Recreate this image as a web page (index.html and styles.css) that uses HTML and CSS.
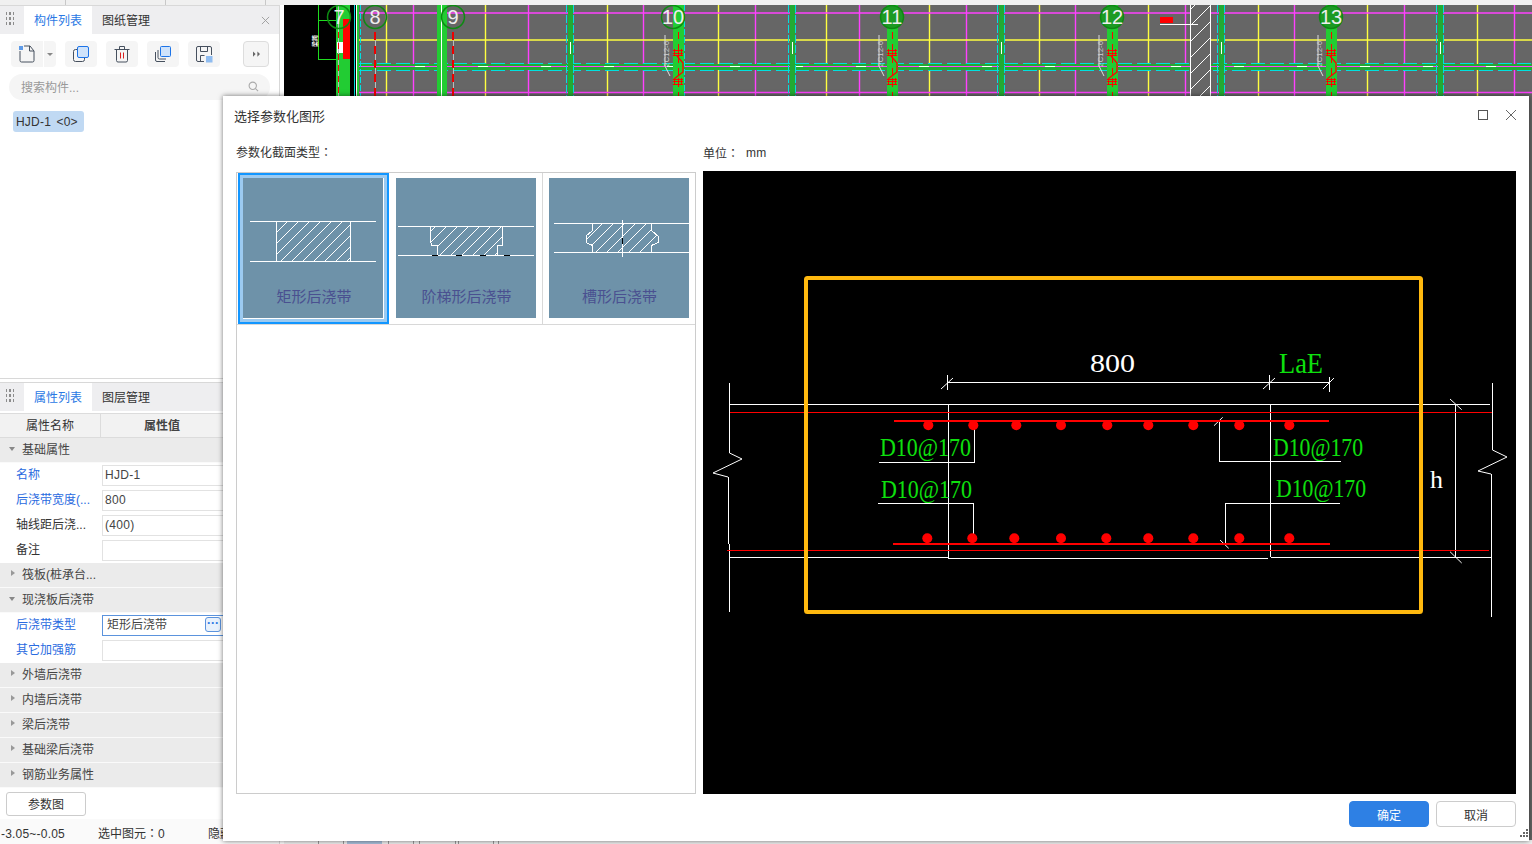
FILE: index.html
```html
<!DOCTYPE html>
<html lang="zh">
<head>
<meta charset="utf-8">
<title>选择参数化图形</title>
<link rel="stylesheet" href="styles.css">
</head>
<body>
<div class="app">
  <div class="ruler"><i></i><i></i><i></i></div>
  <div class="workspace">
    <aside class="side">
      <section class="panel panel-top">
        <header class="tabs">
          <span class="grip"></span>
          <span class="tab active">构件列表</span>
          <span class="tab">图纸管理</span>
          <svg class="tab-close" viewBox="0 0 10 10"><path d="M1 1l8 8M9 1l-8 8"/></svg>
        </header>
        <div class="toolbar">
          <div class="tool tool-new">
            <svg class="ico" viewBox="0 0 18 18"><path class="st" d="M2 6v9.500q0 1.500 1.500 1.500h11q1.500 0 1.500-1.500V6l-4-5H6"/><path class="st" d="M11.500 1v5h4.500"/><rect class="bl" x="1" y="1" width="4" height="4"/></svg>
          </div>
          <div class="tool-drop"><b></b></div>
          <div class="tool">
            <svg class="ico" viewBox="0 0 18 18"><rect class="st" x="1.500" y="4.500" width="11" height="12" rx="2"/><rect class="bf" x="5.500" y="1.500" width="11" height="11" rx="1.500"/></svg>
          </div>
          <div class="tool">
            <svg class="ico" viewBox="0 0 18 18"><path class="st" d="M1.500 4.500h15M6.500 4.500v-3h5v3M3.500 4.500v11q0 1.500 1.500 1.500h8q1.500 0 1.500-1.500v-11"/><path class="rd" d="M7.500 7.500v6M10.500 7.500v6"/></svg>
          </div>
          <div class="tool">
            <svg class="ico" viewBox="0 0 18 18"><path class="st" d="M1.500 7v8q0 1.500 1.500 1.500h8M4 5v7.500q0 1.500 1.500 1.500H12"/><rect class="bf" x="6.500" y="1.500" width="10" height="10" rx="1"/></svg>
          </div>
          <div class="tool">
            <svg class="ico" viewBox="0 0 18 18"><path class="st" d="M9 16.500H3q-1.500 0-1.500-1.500V3q0-1.500 1.500-1.500h12q1.500 0 1.500 1.500v7M5.500 1.500v5h7v-5M5.500 16.500v-6h4"/><rect class="bl2" x="11" y="11" width="6.500" height="6.500"/></svg>
          </div>
          <div class="tool-more"><svg viewBox="0 0 8 6"><path d="M0 0l3 3-3 3zM5 0l3 3-3 3z"/></svg></div>
        </div>
        <div class="search">
          <span>搜索构件...</span>
          <svg viewBox="0 0 12 12"><circle cx="5.200" cy="5.200" r="4"/><path d="M8 8l3 3"/></svg>
        </div>
        <div class="tree"><span class="tag">HJD-1 &lt;0&gt;</span></div>
      </section>
      <section class="panel panel-bottom">
        <header class="tabs">
          <span class="grip"></span>
          <span class="tab active">属性列表</span>
          <span class="tab">图层管理</span>
        </header>
        <div class="grid">
          <div class="grid-head"><span class="c-name">属性名称</span><span class="c-val">属性值</span></div>
          <div class="sect open">基础属性</div>
          <div class="row"><label class="blue">名称</label><span class="field">HJD-1</span></div>
          <div class="row"><label class="blue">后浇带宽度(...</label><span class="field">800</span></div>
          <div class="row"><label>轴线距后浇...</label><span class="field">(400)</span></div>
          <div class="row"><label>备注</label><span class="field"></span></div>
          <div class="sect">筏板(桩承台...</div>
          <div class="sect open">现浇板后浇带</div>
          <div class="row"><label class="blue">后浇带类型</label><span class="field focus">矩形后浇带<em class="dots">···</em></span></div>
          <div class="row"><label class="blue">其它加强筋</label><span class="field"></span></div>
          <div class="sect">外墙后浇带</div>
          <div class="sect">内墙后浇带</div>
          <div class="sect">梁后浇带</div>
          <div class="sect">基础梁后浇带</div>
          <div class="sect">钢筋业务属性</div>
        </div>
        <div class="grid-foot"><button class="param-btn">参数图</button></div>
        <footer class="status"><span class="s1">-3.05~-0.05</span><span class="s2">选中图元<b class="colon" lang="zh-Hant">：</b>0</span><span class="s3">隐藏图元<b class="colon" lang="zh-Hant">：</b>0</span></footer>
      </section>
    </aside>
    <main class="cad">
      <svg class="cad-svg" viewBox="284 5 1248 835" shape-rendering="crispEdges">
        <defs>
          <g id="axisbar">
            <rect x="-5.500" y="5" width="11" height="91" fill="#22cc33"/>
            <path d="M0 32v64" stroke="#f00" stroke-width="1" stroke-dasharray="7 5" fill="none"/>
          </g>
          <g id="rebar">
            <path d="M-5 50h10M-5 53h10M-5 55h10M-5 79h10M-5 81h10M-5 84h10M-4 49v7M0 49v7M3 49v7M-4 78v7M0 78v7M3 78v7" stroke="#f00" fill="none"/>
            <path d="M-1 56l6 7v9l-9 7" stroke="#f00" stroke-width="1.300" fill="none" shape-rendering="auto"/>
            <path d="M-13 35v31l5 10" stroke="#ddd" fill="none" shape-rendering="auto"/>
            <text transform="translate(-9 67) rotate(-90)" class="cad-small">2C12-6</text>
          </g>
          <g id="wallbar">
            <rect x="-2.500" y="5" width="5" height="91" fill="#22aa33"/>
            <path d="M-3.500 5v91M3.500 5v91" stroke="#00e0e0" stroke-width="1" stroke-dasharray="8 2" fill="none"/>
            <path d="M0 42v12" stroke="#fff" stroke-width="1"/>
          </g>
          <pattern id="cadhatch" width="16" height="16" patternUnits="userSpaceOnUse"><path d="M0 16L16 0" stroke="#fff" fill="none" shape-rendering="auto"/></pattern>
        </defs>
        <rect x="284" y="5" width="1248" height="835" fill="#666"/>
        <rect x="284" y="5" width="72" height="835" fill="#000"/>
        <g shape-rendering="auto">
          <path d="M413.500 5v91M528.500 5v91M643.500 5v91M755.500 5v91M859.500 5v91M966.500 5v91M1075.500 5v91M1185.500 5v91M1294.500 5v91M1404.500 5v91M1514.500 5v91" stroke="#ff40ff" stroke-width="1.400"/>
          <path d="M386.500 5v91M485.500 5v91M607.500 5v91M718.500 5v91M826.500 5v91M929.500 5v91M1039.500 5v91M1148.500 5v91M1258.500 5v91M1367.500 5v91M1477.500 5v91" stroke="#ffff40" stroke-width="1.400"/>
          <path d="M358 13h1174M358 92.500h1174" stroke="#ff40ff" stroke-width="1.400"/>
          <path d="M358 40h1174" stroke="#ffff40" stroke-width="1.400"/>
        </g>
        <rect x="358" y="64" width="1174" height="6" fill="#22aa33"/>
        <path d="M358 63.500h1174M358 70.500h1174" stroke="#00e0e0" stroke-width="1" stroke-dasharray="14 5" fill="none"/>
        <path d="M358 66.500h1174" stroke="#ff40ff" stroke-width="1"/>
        <path d="M415 66.500h1117" stroke="#fff" stroke-width="1" stroke-dasharray="10 53" fill="none"/>
        <path d="M318.500 5v54h17M318.500 20h22" stroke="#1fdc1f" fill="none"/>
        <text transform="translate(317 47) rotate(-90)" class="cad-tiny">梁跨</text>
        <rect x="336" y="5" width="14" height="91" fill="#22cc33"/>
        <rect x="343" y="19" width="7" height="40" fill="#f00"/>
        <rect x="337" y="42" width="6" height="11" fill="#fff"/>
        <path d="M338 5v91" stroke="#bbb"/>
        <path d="M338 32v64" stroke="#f00" stroke-dasharray="6 5" fill="none"/>
        <path d="M354 5v91" stroke="#00e0e0" stroke-width="1"/>
        <path d="M356 5v91" stroke="#fff"/>
        <rect x="357" y="5" width="2" height="91" fill="#22cc33"/>
        <path d="M360 5v91" stroke="#00e0e0" stroke-width="1" stroke-dasharray="6 2" fill="none"/>
        <use href="#wallbar" x="570"/>
        <use href="#wallbar" x="792"/>
        <use href="#wallbar" x="1001"/>
        <use href="#wallbar" x="1221"/>
        <use href="#wallbar" x="1440"/>
        <rect x="437" y="5" width="10" height="91" fill="#22cc33"/>
        <path d="M441.500 5v91" stroke="#fff" stroke-width="1"/>
        <path d="M375 32v64M453 32v64" stroke="#bbb"/>
        <path d="M375 32v64M453 32v64" stroke="#e00" stroke-width="2" stroke-dasharray="8 6" fill="none"/>
        <use href="#axisbar" x="678"/><use href="#rebar" x="678"/>
        <path d="M684 5v91" stroke="#00e0e0" stroke-width="1" stroke-dasharray="6 2" fill="none"/>
        <use href="#axisbar" x="892"/><use href="#rebar" x="892"/>
        <use href="#axisbar" x="1112"/><use href="#rebar" x="1112"/>
        <use href="#axisbar" x="1331"/><use href="#rebar" x="1331"/>
        <rect x="1190" y="5" width="21" height="91" fill="#666"/>
        <rect x="1190" y="5" width="21" height="91" fill="url(#cadhatch)"/>
        <path d="M1190.500 5v91M1210.500 5v91" stroke="#fff"/>
        <rect x="1160" y="17" width="13" height="6" fill="#f00"/>
        <path d="M1160 24.500h38" stroke="#fff"/>
        <g class="balloons" shape-rendering="auto">
          <circle cx="339" cy="17" r="11.500"/><circle cx="375" cy="17" r="11.500"/><circle cx="453" cy="17" r="11.500"/><circle cx="673" cy="17" r="11.500"/>
          <circle class="filled" cx="892" cy="17" r="11.500"/><circle class="filled" cx="1112" cy="17" r="11.500"/><circle class="filled" cx="1331" cy="17" r="11.500"/>
          <text x="339" y="24">7</text><text x="375" y="24">8</text><text x="453" y="24">9</text><text x="673" y="24">10</text>
          <text x="892" y="24">11</text><text x="1112" y="24">12</text><text x="1331" y="24">13</text>
        </g>
      </svg>
      <svg class="cad-strip" viewBox="284 840 1248 4" shape-rendering="crispEdges">
        <rect x="347" y="840" width="35" height="4" fill="#a9c0dc"/>
        <path d="M318.500 840v4M343.500 840v4M388.500 840v4M413.500 840v4M419.500 840v4M455.500 840v4M458.500 840v4M493.500 840v4M498.500 840v4" stroke="#999" fill="none"/>
      </svg>
    </main>
  </div>
</div>

<div class="dialog">
  <header class="dlg-title">
    <span>选择参数化图形</span>
    <div class="dlg-win">
      <svg class="win-max" viewBox="0 0 10 10"><rect x="0.500" y="0.500" width="9" height="9"/></svg>
      <svg class="win-close" viewBox="0 0 12 12"><path d="M1 1l10 10M11 1L1 11"/></svg>
    </div>
  </header>
  <div class="dlg-body">
    <div class="col-left">
      <div class="col-label">参数化截面类型<b class="colon" lang="zh-Hant">：</b></div>
      <div class="gallery">
        <div class="gallery-row">
          <div class="cell selected">
            <svg class="thumb" viewBox="0 0 140 140" shape-rendering="crispEdges">
              <defs><pattern id="h1" width="11" height="11" patternUnits="userSpaceOnUse"><path d="M0 11L11 0" stroke="#fff" fill="none"/></pattern></defs>
              <rect width="140" height="140" fill="#6e92a9"/>
              <rect x="33.500" y="43.500" width="74" height="40" fill="url(#h1)" stroke="#fff"/>
              <path d="M7 43.500h126M7 83.500h126" stroke="#fff"/>
              <text x="71" y="124" class="cap">矩形后浇带</text>
            </svg>
          </div>
          <div class="cell">
            <svg class="thumb" viewBox="0 0 140 140" shape-rendering="crispEdges">
              <rect width="140" height="140" fill="#6e92a9"/>
              <path d="M34.500 48.500v14l1 4.500h5.500v10.500h60V67h5v-18.500z" fill="url(#h1)" stroke="#fff"/>
              <path d="M2 48.500h136M2 77.500h136" stroke="#fff"/>
              <path d="M36 77.500h6M60 77.500h6M84 77.500h6M108 77.500h6" stroke="#000"/>
              <text x="70.500" y="124" class="cap">阶梯形后浇带</text>
            </svg>
          </div>
          <div class="cell">
            <svg class="thumb" viewBox="0 0 140 140" shape-rendering="crispEdges">
              <rect width="140" height="140" fill="#6e92a9"/>
              <path d="M43.500 45.500v7L37 58v6.500l6.500 3v7h59v-7l6.500-3V58l-6.500-5.500v-7z" fill="url(#h1)" stroke="#fff"/>
              <path d="M5 45.500h135M5 74.500h135M73.500 42v37" stroke="#fff"/>
              <path d="M73.500 60v6" stroke="#000"/>
              <text x="70.500" y="124" class="cap">槽形后浇带</text>
            </svg>
          </div>
        </div>
      </div>
    </div>
    <div class="col-right">
      <div class="col-label unit"><span>单位<b class="colon" lang="zh-Hant">：</b></span><span>mm</span></div>
      <div class="preview">
        <svg class="preview-svg" viewBox="703 171 813 623">
          <g class="w" shape-rendering="crispEdges">
            <path d="M730 404.500h760M730 557.500h218M948 558.500h320M1270.500 557.500h221"/>
            <path d="M948.500 404v154M1270.500 404v153"/>
            <path d="M729.500 383v70M729.500 544v68M728.500 477v67M1492.500 383v67M1491.500 474v143"/>
            <path d="M947 382.500h382M947.500 375v15M1269.500 375v15M1329.500 377v15M1455.500 404v154"/>
            <path d="M879 462.500h95.500v-35M878 503.500h95.500v32M1341 461.500h-121.500V421M1340 503.500h-114.500V543"/>
          </g>
          <g class="w">
            <path d="M729.500 453l12.500 6-29 14 15 4M1492.500 450l14.500 7-29 14 13 3"/>
            <path d="M941 389l12-11M1263 389l12-11M1323 389l11-11M1214 425.700l8.700-8.400M1220 540l8.700 8.300M1450 399l11.700 10.700M1450 551.700l11.700 11.300"/>
          </g>
          <g class="r" shape-rendering="crispEdges">
            <path d="M730 412.500h762M727 550.500h762"/>
            <path class="thick" d="M894 420.800h435M893 543.800h437"/>
          </g>
          <g fill="#f00">
            <circle cx="928.300" cy="425.300" r="5"/><circle cx="973.300" cy="425.300" r="5"/><circle cx="1016.300" cy="425.300" r="5"/><circle cx="1061" cy="425.300" r="5"/><circle cx="1107.300" cy="425.300" r="5"/><circle cx="1148.300" cy="425.300" r="5"/><circle cx="1193.300" cy="425.300" r="5"/><circle cx="1239.300" cy="425.300" r="5"/><circle cx="1289.300" cy="425.300" r="5"/>
            <circle cx="927.300" cy="538.300" r="5"/><circle cx="972.300" cy="538.300" r="5"/><circle cx="1014.300" cy="538.300" r="5"/><circle cx="1061" cy="538.300" r="5"/><circle cx="1106.300" cy="538.300" r="5"/><circle cx="1148.300" cy="538.300" r="5"/><circle cx="1193.300" cy="538.300" r="5"/><circle cx="1239.300" cy="538.300" r="5"/><circle cx="1289.300" cy="538.300" r="5"/>
          </g>
          <rect class="frame" x="806" y="278" width="615" height="334" rx="1.500"/>
          <text class="t-white t-dim" x="1090" y="372" textLength="45" lengthAdjust="spacingAndGlyphs">800</text>
          <text class="t-green t-lae" x="1279" y="373" textLength="44" lengthAdjust="spacingAndGlyphs">LaE</text>
          <text class="t-white t-dim" x="1430" y="488">h</text>
          <text class="t-green t-bar" x="880" y="456" textLength="91" lengthAdjust="spacingAndGlyphs">D10@170</text>
          <text class="t-green t-bar" x="881" y="498" textLength="91" lengthAdjust="spacingAndGlyphs">D10@170</text>
          <text class="t-green t-bar" x="1273" y="456" textLength="90" lengthAdjust="spacingAndGlyphs">D10@170</text>
          <text class="t-green t-bar" x="1276" y="497" textLength="90" lengthAdjust="spacingAndGlyphs">D10@170</text>
        </svg>
      </div>
    </div>
  </div>
  <footer class="dlg-foot">
    <button class="btn primary">确定</button>
    <button class="btn">取消</button>
    <svg class="sizer" viewBox="0 0 8 8"><path d="M6 0h2v2H6zM3 3h2v2H3zM6 3h2v2H6zM0 6h2v2H0zM3 6h2v2H3zM6 6h2v2H6z"/></svg>
  </footer>
</div>
</body>
</html>
```
FILE: styles.css
```css
* { box-sizing: border-box; }
html, body { margin: 0; padding: 0; width: 1532px; height: 844px; overflow: hidden; }
body {
  background: #fff;
  font-family: "Liberation Sans", "Noto Sans CJK SC", sans-serif;
  font-size: 12px;
  color: #333;
}
.colon { font-family: "Noto Sans CJK TC", sans-serif; font-weight: 400; }
.app { width: 1532px; height: 844px; display: flex; flex-direction: column; }
.ruler { height: 5px; background: #f0f0f0; display: flex; padding-left: 65px; flex: none; }
.ruler i { width: 100px; border-left: 1px solid #c8c8c8; }
.workspace { flex: 1; display: flex; min-height: 0; }

/* left column */
.side { width: 284px; flex: none; display: flex; flex-direction: column; padding-right: 4px; }
.panel { width: 280px; border: 1px solid #d8d8d8; border-width: 1px 1px 0 0; background: #fff; }
.panel-top { height: 374px; border-bottom-width: 1px; }
.panel-bottom { margin-top: 3px; flex: 1; display: flex; flex-direction: column; min-height: 0; border-top: 1px solid #d8d8d8; }
.tabs { height: 28px; background: #eeeef0; display: flex; align-items: stretch; position: relative; }
.grip {
  width: 24px; flex: none;
  background-image: radial-gradient(circle, #8c8c8c 1.200px, transparent 1.500px);
  background-size: 4px 5px;
  background-clip: content-box;
  padding: 5px 10px 8px 6px;
}
.tab { width: 68px; display: flex; align-items: center; justify-content: center; color: #333; padding-bottom: 2px; }
.tab.active { background: #fff; color: #2a78e4; }
.tab-close { position: absolute; right: 9px; top: 10px; width: 9px; height: 9px; }
.tab-close path { stroke: #9a9a9a; stroke-width: 1; fill: none; }

.toolbar { display: flex; align-items: center; height: 26px; margin: 7px 0 0 11px; }
.tool { width: 32px; height: 26px; background: #f5f5f5; border-radius: 4px; display: flex; align-items: center; justify-content: center; margin-right: 9px; }
.tool-new { width: 32px; margin-right: 1px; border-radius: 4px 0 0 4px; }
.tool-drop { width: 12px; height: 26px; background: #f5f5f5; border-radius: 0 4px 4px 0; margin-right: 9px; display: flex; align-items: center; justify-content: center; }
.tool-drop b { border: 3px solid transparent; border-top: 3px solid #888; margin-top: 3px; }
.ico { width: 18px; height: 18px; }
.ico .st { fill: none; stroke: #46505e; stroke-width: 1; }
.ico .bf { fill: #cfe3fb; stroke: #1d74e8; stroke-width: 1; }
.ico .bl { fill: #5d9ae8; }
.ico .bl2 { fill: #8fbcf0; }
.ico .rd { fill: none; stroke: #d92020; stroke-width: 1; }
.tool-more { width: 26px; height: 26px; border: 1px solid #ddd; border-radius: 4px; background: #f5f5f5; margin-left: 14px; display: flex; align-items: center; justify-content: center; }
.tool-more svg { width: 7px; height: 6px; fill: #666; }
.search { margin: 7px 9px 0 9px; height: 26px; border-radius: 13px; background: #f5f5f5; padding: 0 11px 2px 12px; display: flex; align-items: center; justify-content: space-between; color: #999; }
.search svg { width: 11px; height: 11px; fill: none; stroke: #aaa; stroke-width: 1.200; }
.tree { padding: 11px 0 0 13px; }
.tag { display: inline-block; width: 71px; height: 21px; line-height: 22px; background: #c0d9f3; border-radius: 3px; padding-left: 3px; color: #333; white-space: pre; word-spacing: 2px; letter-spacing: 0.200px; }

/* property grid */
.grid { margin-top: 2px; border-top: 1px solid #dcdcdc; }
.grid-head { height: 24px; display: flex; background: #f2f2f2; border-bottom: 1px solid #dcdcdc; }
.c-name { width: 101px; height: 23px; text-align: center; border-right: 1px solid #dcdcdc; line-height: 25px; }
.c-val { width: 122px; text-align: center; font-weight: 700; color: #444; line-height: 25px; }
.sect { height: 25px; line-height: 24px; background: #ebebeb; border-bottom: 1px solid #fafafa; padding-left: 22px; position: relative; color: #444; }
.sect::before { content: ""; position: absolute; left: 11px; top: 7px; border: 3.500px solid transparent; border-left: 4px solid #999; }
.sect.open::before { left: 9px; top: 9px; border: 3.500px solid transparent; border-top: 4px solid #888; }
.row { height: 25px; display: flex; align-items: center; }
.row label { width: 102px; height: 25px; line-height: 24px; padding-left: 16px; flex: none; }
.row label.blue { color: #2a6be0; }
.field { flex: 1; height: 21px; line-height: 18px; border: 1px solid #e2e2e2; padding-left: 2px; position: relative; color: #444; background: #fff; letter-spacing: 0.300px; }
.field.focus { border-color: #5b93dd; padding-left: 4px; letter-spacing: 0; }
.dots { position: absolute; left: 102px; top: 1px; width: 16px; height: 15px; line-height: 10px; border: 1px solid #5b93dd; border-radius: 3px; background: #e8f1fc; color: #2a78e4; font-style: normal; font-weight: 700; text-align: center; }
.grid-foot { padding: 4px 0 0 6px; height: 31px; }
.param-btn { width: 80px; height: 24px; border: 1px solid #ccc; border-radius: 3px; background: #fff; font: inherit; color: #333; padding: 0 0 2px; }
.status { flex: 1; background: #fafafa; position: relative; display: flex; align-items: center; height: 26px; }
.status span { position: absolute; top: 5px; white-space: nowrap; }
.status .s1 { left: 1px; top: 8px; letter-spacing: 0.200px; }
.s2 { left: 98px; }
.s3 { left: 208px; }

/* cad canvas */
.cad { flex: 1; min-width: 0; background: #f0f0f0; display: flex; flex-direction: column; }
.cad-svg { display: block; width: 1248px; height: 835px; flex: none; }
.cad-strip { display: block; width: 1248px; height: 4px; flex: none; }
.cad-small { font-family: "Liberation Sans", "Noto Sans CJK SC", sans-serif; font-size: 8px; fill: #cfcfcf; }
.cad-tiny { font-family: "Noto Sans CJK SC", sans-serif; font-size: 6px; font-weight: 700; fill: #fff; }
.balloons circle { fill: none; stroke: #0d8a12; stroke-width: 1.500; }
.balloons circle.filled { fill: #1c9a24; }
.balloons text { font-family: "Liberation Sans", sans-serif; font-size: 20px; fill: #eee; text-anchor: middle; }

/* dialog */
.dialog {
  position: absolute; left: 223px; top: 96px; width: 1306px; height: 745px;
  background: #fff; display: flex; flex-direction: column;
  box-shadow: 0 0 5px rgba(0, 0, 0, 0.55);
}
.dlg-title { height: 40px; display: flex; align-items: center; justify-content: space-between; padding: 0 12px 2px 11px; font-size: 13px; flex: none; }
.dlg-win { display: flex; align-items: center; gap: 17px; }
.win-max { width: 10px; height: 10px; }
.win-max rect { fill: none; stroke: #555; }
.win-close { width: 12px; height: 12px; }
.win-close path { fill: none; stroke: #666; }
.dlg-body { flex: 1; display: flex; padding: 0 13px; min-height: 0; }
.col-left { width: 460px; flex: none; display: flex; flex-direction: column; margin-right: 7px; }
.col-right { flex: 1; display: flex; flex-direction: column; min-width: 0; }
.col-label { height: 35px; line-height: 31px; color: #333; white-space: nowrap; }
.unit { display: flex; gap: 7px; height: 35px; line-height: 33px; }
.unit span { flex: none; }
.unit span + span { letter-spacing: 0.300px; line-height: 34px; }
.gallery { flex: 1; border: 1px solid #ccc; margin-top: 1px; background: #fff; }
.gallery-row { display: flex; border-bottom: 1px solid #d8d8d8; height: 152px; }
.cell { width: 153px; height: 151px; flex: none; border-right: 1px solid #d8d8d8; padding: 5px 0 0 6px; }
.cell + .cell + .cell { width: 152px; border-right: 0; }
.cell.selected {
  width: 151px; margin: 0 1px; height: 151px;
  border: 2px solid #1296ff; box-shadow: inset 0 0 0 3px #9ccaf0; padding: 3px 0 0 3px;
}
.thumb { display: block; width: 140px; height: 140px; }
.cap { font-family: "Noto Sans CJK SC", sans-serif; font-size: 15px; fill: #4a5090; text-anchor: middle; }
.preview { flex: 1; background: #000; }
.preview-svg { display: block; width: 813px; height: 623px; }
.preview-svg text { font-family: "Liberation Serif", serif; }
.t-dim { font-size: 26px; }
.t-lae { font-size: 29px; }
.t-bar { font-size: 25px; }
.preview-svg .w path { fill: none; stroke: #fff; stroke-width: 1; }
.preview-svg .r path { fill: none; stroke: #f00; stroke-width: 1; }
.preview-svg .r path.thick { stroke-width: 2; }
.frame { fill: none; stroke: #ffb90f; stroke-width: 4; }
.t-white { fill: #fff; }
.t-green { fill: #0ee00e; }
.dlg-foot { height: 47px; flex: none; display: flex; justify-content: flex-end; align-items: flex-start; gap: 7px; padding: 7px 13px 0 0; position: relative; }
.btn { width: 80px; height: 26px; border: 1px solid #ccc; border-radius: 4px; background: #fff; font: inherit; color: #333; padding: 0; }
.btn.primary { background: #2e80e4; border-color: #2e80e4; color: #fff; }
.sizer { position: absolute; right: 1px; bottom: 4px; width: 8px; height: 8px; fill: #666; }
```
